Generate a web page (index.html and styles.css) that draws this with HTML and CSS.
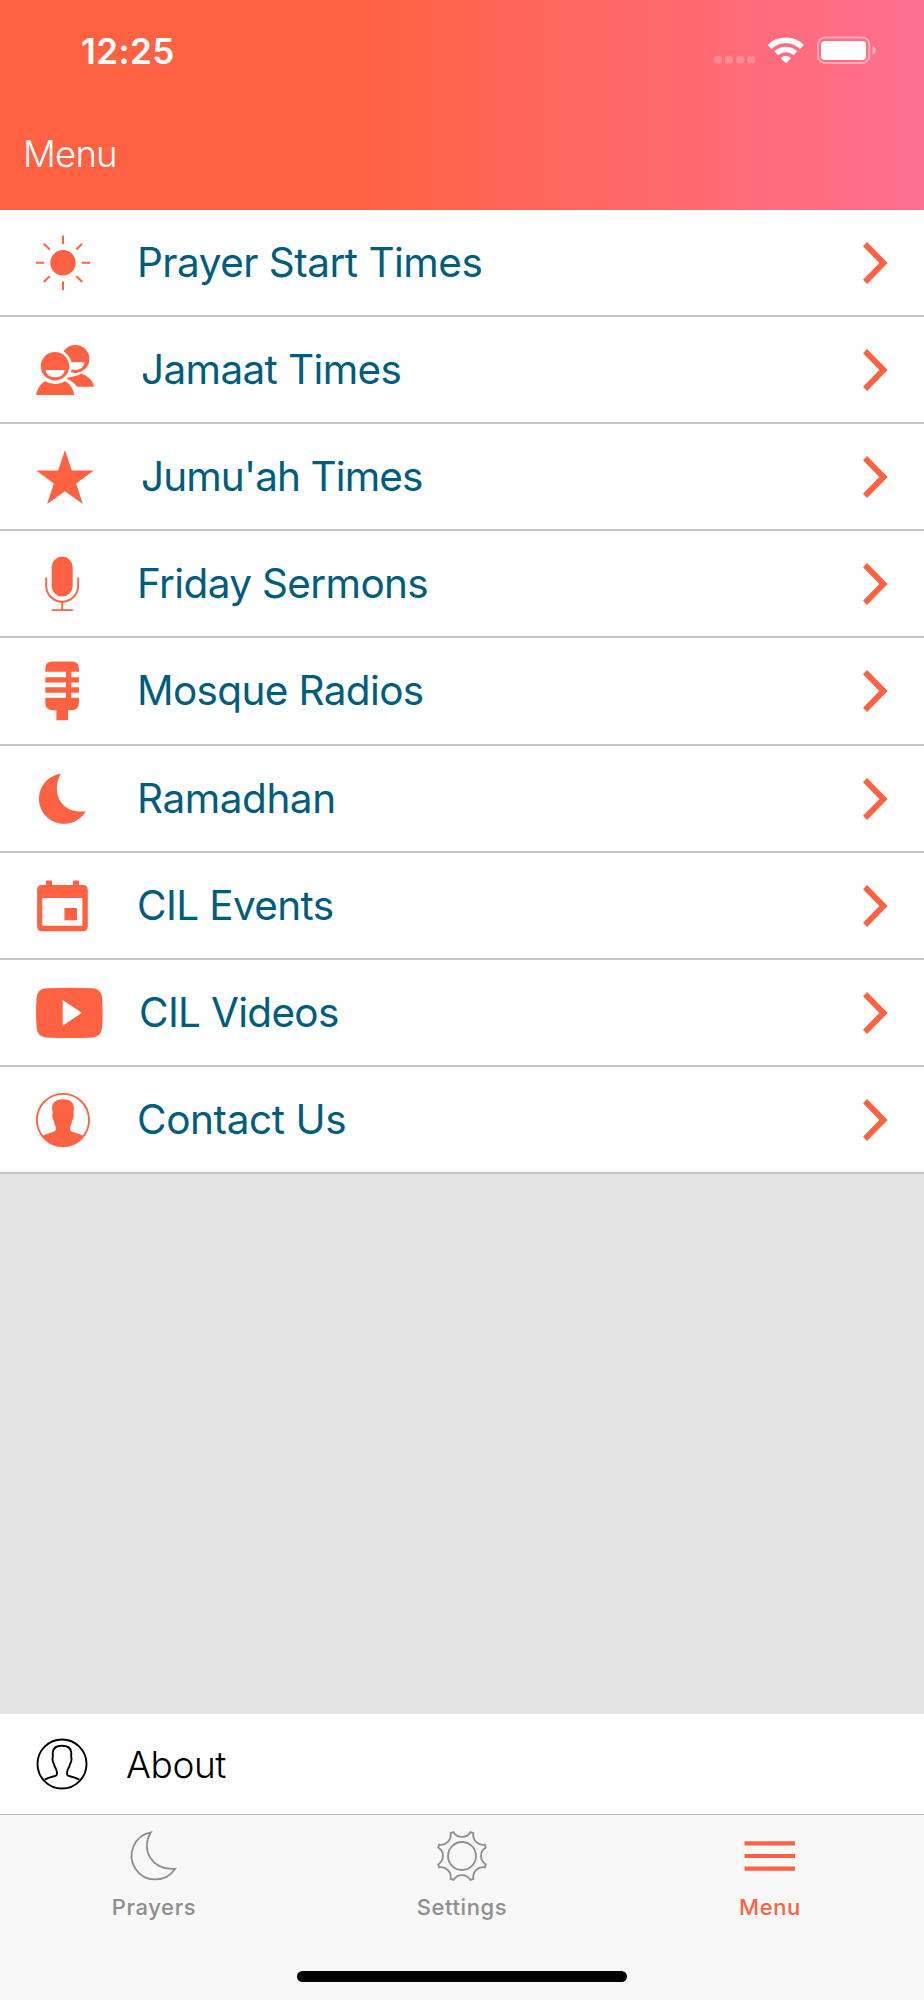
FILE: index.html
```html
<!DOCTYPE html>
<html lang="en">
<head>
<meta charset="utf-8">
<title>Menu</title>
<link rel="stylesheet" href="styles.css">
</head>
<body>
<div class="screen">
  <header class="header">
    <div class="status">
      <span class="time">12:25</span>
      <svg class="indicators" viewBox="710 30 170 40">
        <g class="dim-fill">
          <rect x="714" y="56" width="8" height="7.5" rx="2.5"/>
          <rect x="725" y="56" width="8" height="7.5" rx="2.5"/>
          <rect x="736.2" y="56" width="8" height="7.5" rx="2.5"/>
          <rect x="747.3" y="56" width="8" height="7.5" rx="2.5"/>
        </g>
        <g class="wifi">
          <path d="M769.6 47A23.2 23.2 0 0 1 802 47"/>
          <path d="M776.3 53.3A14 14 0 0 1 795.4 53.3"/>
        </g>
        <path class="white" d="M785.9 63.3L780.8 58.3Q785.9 53.4 791 58.3Z"/>
        <rect class="battery-case" x="818" y="37.5" width="51.3" height="25.4" rx="7"/>
        <rect class="white" x="821" y="41" width="45" height="19" rx="4"/>
        <path class="battery-nub" d="M872.5 46Q876 47.5 876 50.3T872.5 54.8Z"/>
      </svg>
    </div>
    <h1 class="title">Menu</h1>
  </header>

  <main class="list">
    <a class="row">
      <svg class="icon" viewBox="30 0 80 105"><circle cx="63" cy="52.8" r="12.7"/><path class="rays" d="M36 52.8h8.2M81.8 52.8H90M63 25.5v8.5M63 71.6V80M43.8 33.6l5.9 5.9M82.2 33.6l-5.9 5.9M43.8 72l5.9-5.9M82.2 72l-5.9-5.9"/></svg>
      <span class="label l1">Prayer Start Times</span>
      <svg class="chevron" viewBox="860 0 30 105"><path d="M863 36.3L867.1 32 887.7 53 867.1 74 863 69.7 879.4 53Z"/></svg>
    </a>
    <a class="row">
      <svg class="icon" viewBox="30 0 80 105"><circle cx="75.4" cy="41.9" r="14"/><path class="cut" d="M66 45.2H84.6C84 50 80 52.9 75 52.9C71 52.9 67 50 66 45.2Z"/><path d="M66 61.2C70 59.6 76 60 81 56.5C88 58.5 92.6 63.5 94.2 69.8H77C74.8 66 71 63.5 66 61.2Z"/><circle class="cut" cx="55" cy="49.2" r="16.9"/><circle cx="55" cy="49.2" r="14.2"/><path class="cut" d="M45.6 53H64.6C64 57.8 60.3 60.3 55.1 60.3C50 60.3 46.2 57.8 45.6 53Z"/><path d="M36 77.9C37.5 71.2 41 66 45.6 64.3C51.5 67.8 59 67.8 64.9 64.3C69.5 66 73 71.2 74.3 77.9Z"/></svg>
      <span class="label l2">Jamaat Times</span>
      <svg class="chevron" viewBox="860 0 30 105"><path d="M863 36.3L867.1 32 887.7 53 867.1 74 863 69.7 879.4 53Z"/></svg>
    </a>
    <a class="row">
      <svg class="icon" viewBox="30 0 80 105"><path d="M65 26L71.8 46.4H93.8L76.2 59.4 82.8 79.9 65 67.3 47.2 79.9 53.8 59.4 36.2 46.4H58.2Z"/></svg>
      <span class="label l3">Jumu'ah Times</span>
      <svg class="chevron" viewBox="860 0 30 105"><path d="M863 36.3L867.1 32 887.7 53 867.1 74 863 69.7 879.4 53Z"/></svg>
    </a>
    <a class="row">
      <svg class="icon" viewBox="30 0 80 105"><rect x="51.7" y="25.6" width="21" height="40" rx="10.5"/><path class="line" d="M46.2 46.6V54.7A16 16 0 0 0 78.2 54.7V46.6M62.2 70.7V79M51.7 79.1H72.8"/></svg>
      <span class="label l4">Friday Sermons</span>
      <svg class="chevron" viewBox="860 0 30 105"><path d="M863 36.3L867.1 32 887.7 53 867.1 74 863 69.7 879.4 53Z"/></svg>
    </a>
    <a class="row">
      <svg class="icon" viewBox="30 0 80 105"><path d="M45.3 33.8V30.5Q45.3 23.5 52.3 23.5H72Q79 23.5 79 30.5V33.8H71.4V39.2H79V44.5H71.4V49.3H79V54.8H71.4V59.8H79V64.5Q79 72.3 71.5 72.3H68V82.2H56.4V72.3H52.8Q45.3 72.3 45.3 64.5V59.8H66V54.8H45.3V49.3H66V44.5H45.3V39.2H66V33.8Z"/></svg>
      <span class="label l5">Mosque Radios</span>
      <svg class="chevron" viewBox="860 0 30 105"><path d="M863 36.3L867.1 32 887.7 53 867.1 74 863 69.7 879.4 53Z"/></svg>
    </a>
    <a class="row">
      <svg class="icon" viewBox="30 0 80 105"><path d="M60.8 27.8A25.1 25.1 0 1 0 85.8 65.2C61 68.5 50.5 46.5 60.8 27.8Z"/></svg>
      <span class="label l6">Ramadhan</span>
      <svg class="chevron" viewBox="860 0 30 105"><path d="M863 36.3L867.1 32 887.7 53 867.1 74 863 69.7 879.4 53Z"/></svg>
    </a>
    <a class="row">
      <svg class="icon" viewBox="30 0 80 105"><path fill-rule="evenodd" d="M46 27.5H52V31.9H73V27.5H79V31.9H82.7Q87.8 31.9 87.8 37V73.2Q87.8 78.3 82.7 78.3H42.2Q37.1 78.3 37.1 73.2V37Q37.1 31.9 42.2 31.9H46ZM42.3 45V72.7H82.4V45Z"/><rect x="64.4" y="55" width="12.6" height="12.3"/></svg>
      <span class="label l7">CIL Events</span>
      <svg class="chevron" viewBox="860 0 30 105"><path d="M863 36.3L867.1 32 887.7 53 867.1 74 863 69.7 879.4 53Z"/></svg>
    </a>
    <a class="row">
      <svg class="icon" viewBox="30 0 80 105"><path fill-rule="evenodd" d="M46 28.3Q69.4 27.3 92.7 28.3Q101.3 28.8 102.1 38Q103.2 52.8 102.1 67.6Q101.3 76.8 92.7 77.4Q69.4 78.4 46 77.4Q37.4 76.8 36.6 67.6Q35.5 52.8 36.6 38Q37.4 28.8 46 28.3ZM62.7 40V65.8L81.8 52.8Z"/></svg>
      <span class="label l8">CIL Videos</span>
      <svg class="chevron" viewBox="860 0 30 105"><path d="M863 36.3L867.1 32 887.7 53 867.1 74 863 69.7 879.4 53Z"/></svg>
    </a>
    <a class="row">
      <svg class="icon" viewBox="30 0 80 105"><circle class="line" cx="63" cy="53" r="26.1"/><path d="M63 32.3C56.2 32.3 52.1 35 52.1 41.5C52.1 43.3 52.7 45 52.5 46.5C51.8 48.5 52.8 52.3 54 54.2C54.3 57.5 56 59 56 62C56 64.3 54 64.6 51.5 65.4C48.5 66.3 45 67.5 42.4 69A26.1 26.1 0 0 0 83.6 69C81 67.5 77.5 66.3 74.5 65.4C72 64.6 70 64.3 70 62C70 59 71.7 57.5 72 54.2C73.2 52.3 74.2 48.5 73.5 46.5C73.3 45 73.9 43.3 73.9 41.5C73.9 35 69.8 32.3 63 32.3Z"/></svg>
      <span class="label l9">Contact Us</span>
      <svg class="chevron" viewBox="860 0 30 105"><path d="M863 36.3L867.1 32 887.7 53 867.1 74 863 69.7 879.4 53Z"/></svg>
    </a>
  </main>

  <a class="about">
    <svg class="about-icon" viewBox="-30 -30 60 60"><circle r="24.5"/><path d="M-17.3 15.6C-13 13 -8 12.8 -6 11.6C-4.6 10.6 -5 8 -5.6 6C-6.3 4 -7.6 3 -7.9 0.3C-9 -1.5 -9.8 -5 -9.2 -7C-9 -8.3 -9.5 -9.5 -9.2 -11.6C-8.8 -15.8 -5.3 -18.2 0 -18.2C5.3 -18.2 8.8 -15.8 9.2 -11.6C9.5 -9.5 9 -8.3 9.2 -7C9.8 -5 9 -1.5 7.9 0.3C7.6 3 6.3 4 5.6 6C5 8 4.6 10.6 6 11.6C8 12.8 13 13 17.3 15.6"/></svg>
    <span class="about-label">About</span>
  </a>

  <nav class="tabs">
    <a class="tab">
      <svg class="tab-icon" viewBox="-30 -30 60 60"><path d="M-3.2 -23.7A23.8 23.8 0 1 0 21.2 12.8C-2.5 14.5 -13.5 -6 -3.2 -23.7Z"/></svg>
      <span class="tab-label">Prayers</span>
    </a>
    <a class="tab">
      <svg class="tab-icon" viewBox="-30 -30 60 60"><circle r="14"/><path d="M-8.4 -23.8A9.8 9.8 0 0 0 8.4 -23.8L11.4 -22.8A9.8 9.8 0 0 0 22.8 -11.4L23.8 -8.4A9.8 9.8 0 0 0 23.8 8.4L22.8 11.4A9.8 9.8 0 0 0 11.4 22.8L8.4 23.8A9.8 9.8 0 0 0 -8.4 23.8L-11.4 22.8A9.8 9.8 0 0 0 -22.8 11.4L-23.8 8.4A9.8 9.8 0 0 0 -23.8 -8.4L-22.8 -11.4A9.8 9.8 0 0 0 -11.4 -22.8Z"/></svg>
      <span class="tab-label">Settings</span>
    </a>
    <a class="tab active">
      <svg class="tab-icon" viewBox="-30 -30 60 60"><path class="bars" d="M-25.5 -12.6H25M-25.5 0H25M-25.5 12.7H25"/></svg>
      <span class="tab-label">Menu</span>
    </a>
    <div class="home"></div>
  </nav>
</div>
</body>
</html>
```
FILE: styles.css
```css
* { box-sizing: border-box; }
body { margin: 0; font-family: Inter, "Liberation Sans", sans-serif; }
svg { display: block; flex: none; }
.screen { width: 924px; height: 2000px; display: flex; flex-direction: column; background: #e4e4e4; }

.header { height: 210px; flex: none; background: linear-gradient(90deg, #ff6243 0%, #ff6243 40%, #ff6f91 100%); color: #fff; }
.status { height: 100px; display: flex; align-items: center; justify-content: space-between; padding: 0 44px 0 81px; }
.time { padding-top: 1px; font-size: 35px; font-weight: 600; line-height: 42px; letter-spacing: .4px; }
.indicators { width: 170px; height: 40px; }
.white { fill: #fff; }
.dim-fill { fill: #fff; opacity: .22; }
.wifi { fill: none; stroke: #fff; stroke-width: 5.6; }
.battery-case { fill: none; stroke: #fff; stroke-width: 2; opacity: .42; }
.battery-nub { fill: #fff; opacity: .45; }
.title { margin: 0; padding: 32px 0 0 23px; font-size: 36.5px; font-weight: 350; line-height: 44px; letter-spacing: -.8px; }

.list { display: flex; flex-direction: column; flex: none; }
.row { height: 107.12px; display: flex; align-items: center; padding: 0 34px 0 30px; background: #fff; border-bottom: 2px solid #c6c6c8; }
.icon { width: 80px; height: 105px; fill: #ff6243; }
.cut { fill: #fff; }
.rays { fill: none; stroke: #ff6243; stroke-width: 2; }
.line { fill: none; stroke: #ff6243; stroke-width: 1.9; }
.label { flex: 1; padding: 1px 0 0 27px; font-size: 40.5px; line-height: 48px; letter-spacing: -.64px; color: #005d7c; white-space: nowrap; }
.l1 { letter-spacing: -.52px; }
.l2, .l3 { padding-left: 31px; }
.l3 { letter-spacing: -.9px; }
.l6 { letter-spacing: -.45px; }
.l8 { padding-left: 29px; letter-spacing: -.7px; }
.l9 { letter-spacing: -.4px; }
.chevron { width: 30px; height: 105px; fill: #ff6243; }

.about { height: 100px; flex: none; margin-top: auto; display: flex; align-items: center; padding-left: 32px; background: #fff; color: #000; }
.about-icon { width: 60px; height: 60px; fill: none; stroke: #000; stroke-width: 1.9; }
.about-label { padding: 1px 0 0 34px; font-size: 37px; font-weight: 300; line-height: 46px; letter-spacing: -.4px; }

.tabs { height: 186px; flex: none; display: grid; grid-template-columns: repeat(3, 1fr); grid-template-rows: 156px 11px; background: #f8f8f8; border-top: 1px solid #b8b8b8; color: #8e8e8e; }
.tab { display: flex; flex-direction: column; align-items: center; padding-top: 11px; }
.tab-icon { width: 60px; height: 60px; fill: none; stroke: currentColor; stroke-width: 1.8; }
.bars { stroke-width: 4.2; }
.tab-label { margin-top: 8px; font-size: 22px; font-weight: 450; line-height: 27px; letter-spacing: .6px; }
.active { color: #ff6243; }
.home { grid-column: 1 / -1; justify-self: center; width: 330px; height: 11px; border-radius: 6px; background: #000; }
```
